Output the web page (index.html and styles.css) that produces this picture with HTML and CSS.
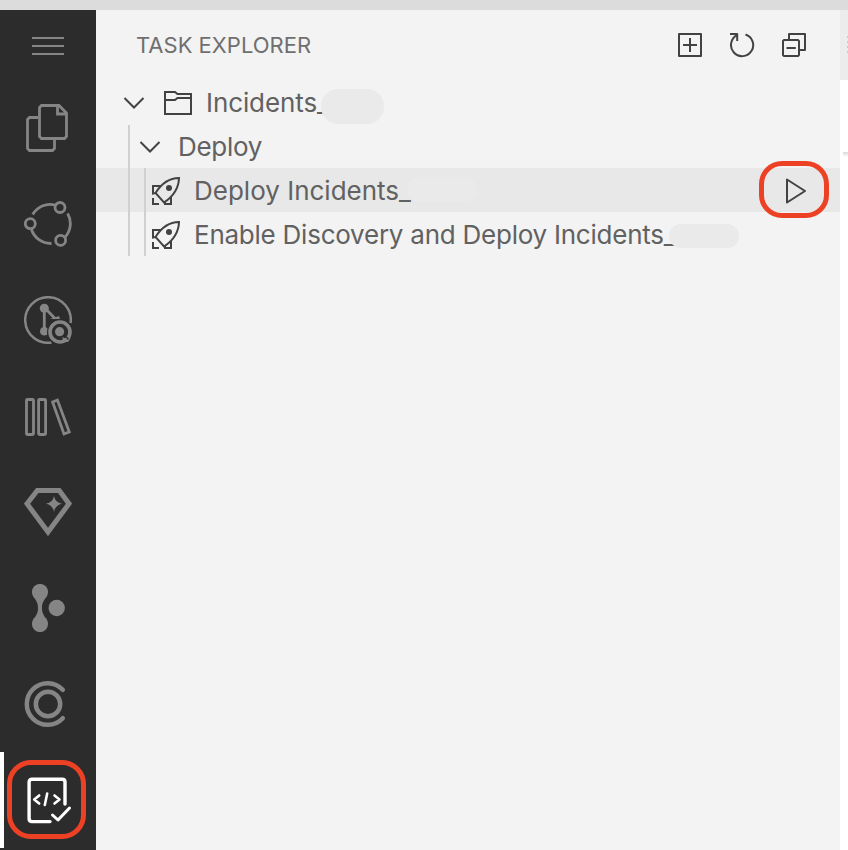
FILE: index.html
```html
<!DOCTYPE html>
<html lang="en">
<head>
<meta charset="utf-8">
<title>Task Explorer</title>
<link rel="stylesheet" href="styles.css">
</head>
<body>
<div class="titlebar"></div>
<div class="workbench">
  <nav class="activity">
    <div class="menu"><i></i><i></i><i></i></div>
    <div class="item"><svg viewBox="0 0 48 48"><path class="s3" d="M14 13.5H5.5L3.5 15.5V44.5L5.500 46.500H28.500L30.500 44.500V36M17.500 1.500H35L42.500 9V32.500L40.500 34.500H17.500L15.500 32.500V3.500ZM33.500 1.500V10H42.500"/></svg></div>
    <div class="item"><svg viewBox="0 0 48 48"><g class="s3"><circle cx="36" cy="7.500" r="5"/><circle cx="6.300" cy="23.700" r="5"/><circle cx="36.600" cy="40.300" r="5"/><path d="M8.700 14.500A20 20 0 0 1 31 5M43.600 13.500A20 20 0 0 1 41.200 37M7.300 29A20.500 20.500 0 0 0 27.500 43.500"/></g></svg></div>
    <div class="item"><svg viewBox="0 0 48 48"><path class="s25" d="M46.600 27A22.800 22.800 0 1 0 27.500 46.500"/><g class="f"><circle cx="20.300" cy="12.300" r="4.500"/><circle cx="20.300" cy="35.300" r="4.300"/></g><path class="s3" d="M20.300 12V35M21 12L31 22.500"/><path class="f" d="M26 23L35 20L36 23Z"/><circle class="mask" cx="36" cy="36" r="13"/><circle class="s35" cx="36" cy="36" r="10"/><circle class="f" cx="35.600" cy="35.700" r="4.600"/><path class="f" d="M38.500 41L41 42.500L43 40L46.500 42.500L44 46L39 46Z"/><path class="notch" d="M41.500 40L44.500 43.500"/></svg></div>
    <div class="item"><svg viewBox="0 0 48 48"><g class="s3"><rect x="2.500" y="7.500" width="7" height="35" rx="1"/><rect x="14.600" y="7.500" width="7" height="35" rx="1"/><path d="M28.600 10L33.400 8.100L45.300 39.900L40 42Z"/></g></svg></div>
    <div class="item"><svg viewBox="0 0 48 48"><path class="s5" d="M13.300 2.500H35.300L45 15.700L24 44L3 15.700Z"/><path class="f" d="M30 8Q31.200 14.500 38 15.700Q31.200 17 30 24Q28.800 17 22 15.700Q28.800 14.500 30 8Z"/></svg></div>
    <div class="item"><svg viewBox="0 0 48 48"><g class="f"><circle cx="16" cy="8" r="8.100"/><circle cx="16" cy="40" r="8.100"/><circle cx="32.700" cy="24" r="8.200"/><path d="M9 12C12.500 17 14 19 14 24S12.500 31 9 36H23C19.500 31 18 29 18 24S19.500 17 23 12Z"/></g></svg></div>
    <div class="item"><svg viewBox="0 0 48 48"><circle class="s45" cx="24" cy="24" r="12.200"/><path class="s45" d="M38.800 9.800A20.800 20.800 0 1 0 38.800 38.200"/></svg></div>
    <div class="item active"><svg viewBox="0 0 48 48"><g class="white"><path d="M41 28V6Q41 3.300 38 3.300H8Q5.100 3.300 5.100 6V42.500Q5.100 45.600 8 45.600H26"/><path class="code" d="M15.200 19.500L10.200 23.500L15.200 27.500M30.500 19.500L35.500 23.500L30.500 27.500M23.200 17.500L20.800 29"/><path class="check" d="M28.500 39L34 44L45.500 32"/></g></svg><div class="ring code-ring"></div></div>
  </nav>
  <main class="explorer">
    <header>
      <h1><span>TASK EXPLORER</span></h1>
      <div class="tools">
        <svg viewBox="0 0 26 26"><path d="M2 2H24V24H2ZM13 6V20M6 13H20"/></svg>
        <svg viewBox="0 0 26 26"><path d="M8 3.200A11.100 11.100 0 1 0 16.500 2.500M1 2H8.200V9"/></svg>
        <svg viewBox="0 0 26 26"><path d="M8 8V2H24V18H18M3 8H17L18 9V23L17 24H3L2 23V9ZM5.500 16H14.800"/></svg>
      </div>
    </header>
    <div class="row root"><svg class="chev" viewBox="0 0 22 14"><path d="M1.500 2L11 11.500L20.500 2"/></svg><svg class="folder" viewBox="0 0 30 26"><path d="M2 2H12L14.500 4H28V24H2ZM2 10H12L14.500 8H28"/></svg><span class="t1">Incidents_</span><b class="smudge one"></b></div>
    <div class="row group"><svg class="chev" viewBox="0 0 22 14"><path d="M1.500 2L11 11.500L20.500 2"/></svg><span class="t2">Deploy</span></div>
    <div class="row task selected"><svg class="rocket" viewBox="0 0 30 30"><path d="M4.500 17Q14 2 28 2Q27.500 17 13 26.500ZM10 10H2V17.500L4.500 17M20 21V28H14V25M2 22V28H8"/><circle cx="18" cy="12" r="3"/></svg><span class="t3">Deploy Incidents_</span><b class="smudge two"></b><div class="run"><svg viewBox="0 0 22 28"><path d="M2 2.500L20 14L2 25.500Z"/></svg><div class="ring"></div></div></div>
    <div class="row task"><svg class="rocket" viewBox="0 0 30 30"><path d="M4.500 17Q14 2 28 2Q27.500 17 13 26.500ZM10 10H2V17.500L4.500 17M20 21V28H14V25M2 22V28H8"/><circle cx="18" cy="12" r="3"/></svg><span class="t4">Enable Discovery and Deploy Incidents_</span><b class="smudge three"></b></div>
  </main>
  <aside><div class="tab"><i></i><i></i><i></i><i></i></div><div class="pane"></div><div class="shade"></div></aside>
</div>
</body>
</html>
```

FILE: styles.css
```css
* { box-sizing: border-box; }
body { margin: 0; height: 850px; overflow: hidden; font-family: Inter, "Liberation Sans", sans-serif; color: #616161; background: #fff; }
svg { display: block; fill: none; flex: none; }
.titlebar { height: 10px; background: #dcdcdc; }
.workbench { display: flex; height: 840px; }
.activity { width: 96px; background: #2c2c2c; flex: none; }
.menu { height: 70px; padding: 27px 32px 0; display: flex; flex-direction: column; gap: 6px; }
.menu i { height: 2px; background: #858585; flex: none; }
.item { height: 96px; display: flex; align-items: center; justify-content: center; position: relative; }
.item svg { width: 48px; height: 48px; stroke: #858585; }
.s25 { stroke-width: 2.5; }
.s3 { stroke-width: 2.8; }
.s35 { stroke-width: 3.6; }
.s45 { stroke-width: 4.5; stroke-linecap: round; }
.s5 { stroke-width: 5; }
.f { fill: #858585; stroke: none; }
.mask { fill: #2c2c2c; stroke: none; }
.notch { stroke: #2c2c2c; stroke-width: 1.3; }
.white { stroke: #fff; stroke-width: 3.4; stroke-linecap: round; stroke-linejoin: round; }
.code { stroke-width: 2.6; }
.check { stroke-width: 3; }
.active { border-left: 4px solid #fff; padding-right: 4px; }
.ring { position: absolute; border: 5px solid #ed4125; }
.code-ring { left: 3px; top: 8px; width: 79px; height: 79px; border-radius: 24px; }
.explorer { width: 744px; background: #f3f3f3; flex: none; }
header { height: 70px; padding: 0 33px 0 40px; display: flex; align-items: center; justify-content: space-between; }
h1 { margin: 0; font-size: 22px; font-weight: 400; line-height: 26px; color: #6f6f6f; }
.tools { display: flex; gap: 26px; }
.tools svg { width: 26px; height: 26px; stroke: #424242; stroke-width: 2; stroke-linejoin: round; }
.row { height: 44px; display: flex; align-items: center; font-size: 26px; line-height: 44px; white-space: nowrap; position: relative; }
.root { margin-top: 1px; padding-left: 27px; }
.group { height: 43px; padding-left: 43px; }
.chev { width: 22px; height: 14px; stroke: #424242; stroke-width: 2; }
.folder { width: 30px; height: 26px; margin: 0 13px 0 18px; stroke: #424242; stroke-width: 2; }
.group .chev { margin-right: 17px; }
.t1 { letter-spacing: -0.1px; }
.t2 { letter-spacing: -0.3px; }
.t4 { letter-spacing: -0.24px; }
.task { padding: 2px 0 0 55px; }
.selected { background: #e8e8e8; }
.rocket { width: 30px; height: 30px; margin-right: 13px; stroke: #424242; stroke-width: 2; }
.rocket circle { fill: #424242; stroke: none; }
.group::before, .task::before { content: ""; position: absolute; left: 32px; top: 0; height: 100%; width: 2px; background: #d0d0d0; }
.task::after { content: ""; position: absolute; left: 48px; top: 0; height: 100%; width: 2px; background: #d0d0d0; }
.smudge { position: absolute; background: #eaeaea; border-radius: 17px; }
.one { left: 225px; top: 8px; width: 63px; height: 35px; }
.two { left: 311px; top: 9px; width: 70px; height: 25px; }
.three { left: 573px; top: 12px; width: 70px; height: 24px; }
.run { position: absolute; left: 663px; top: -7px; width: 70px; height: 57px; }
.run svg { width: 22px; height: 28px; margin: 16px 0 0 26px; stroke: #424242; stroke-width: 2; stroke-linejoin: round; }
.run .ring { inset: 0; border-radius: 23px; }
aside { flex: 1; background: #fff; }
.tab { height: 70px; background: #ececec; padding: 26px 0 0 7px; display: flex; flex-direction: column; gap: 3px; }
.tab i { height: 2px; background: #c8c8c8; }
.pane { height: 72px; }
.shade { height: 5px; margin-left: 3px; background: linear-gradient(#dadada, #fff); }
```
